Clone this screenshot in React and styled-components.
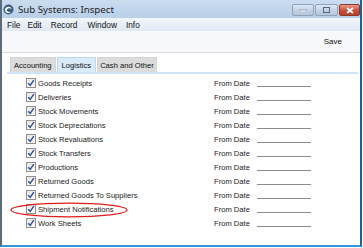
import styled, { createGlobalStyle } from "styled-components";

const GlobalStyle = createGlobalStyle`
  html, body {
    margin: 0;
    padding: 0;
    background: #ffffff;
  }
  body {
    width: 363px;
    height: 248px;
    overflow: hidden;
    font-family: "Liberation Sans", Arial, sans-serif;
  }
`;

const Window = styled.div`
  position: relative;
  box-sizing: border-box;
  width: 362px;
  height: 247px;
  display: flex;
  flex-direction: column;
  background: #ffffff;
  border-left: 2px solid #5b6b7c;
  border-right: 2px solid #245f97;
  border-bottom: 2px solid #3396d8;
`;

const TitleBar = styled.div`
  height: 18px;
  display: flex;
  align-items: center;
  padding-left: 1px;
  background: linear-gradient(#cbdcef, #b9d0e9);
`;

const TitleText = styled.span`
  margin-left: 4px;
  font-family: "Noto Sans", "Open Sans", sans-serif;
  font-size: 9.7px;
  color: #1c1c1c;
  flex: 1;
`;

const WinButtons = styled.div`
  display: flex;
  gap: 1px;
  align-self: flex-start;
  margin-top: 4px;
`;

const WinButton = styled.div`
  box-sizing: border-box;
  width: ${(p) => p.$w}px;
  height: 12px;
  border: 1px solid ${(p) => (p.$close ? "#8d3a2c" : "#8ea2b8")};
  border-radius: 2px;
  background: ${(p) =>
    p.$close
      ? "linear-gradient(#e99a86, #c9503a 55%, #b8402c)"
      : "linear-gradient(#dce7f3, #c3d3e6 55%, #b4c7de)"};
  display: flex;
  align-items: center;
  justify-content: center;
`;

const MenuBar = styled.div`
  height: 13px;
  display: flex;
  align-items: center;
  background: linear-gradient(#f2f6fb, #dfe8f3);
  font-size: 8.3px;
  color: #111;
`;

const MenuItem = styled.span`
  margin-left: ${(p) => p.$ml}px;
`;

const Toolbar = styled.div`
  box-sizing: border-box;
  height: 22px;
  display: flex;
  align-items: center;
  justify-content: flex-end;
  padding-right: 18px;
  background: #f7f8f9;
  border-bottom: 1px solid #dadcdf;
  font-size: 8px;
  color: #111;
`;

const Body = styled.div`
  flex: 1;
  padding: 4px 0 0 5px;
`;

const Tabs = styled.div`
  display: flex;
  height: 15px;
  padding-left: 3px;
`;

const Tab = styled.div`
  box-sizing: border-box;
  display: flex;
  align-items: center;
  padding: 0 ${(p) => p.$pad}px;
  margin-right: 1px;
  font-size: 7.6px;
  color: #111;
  background: ${(p) => (p.$active ? "#d9eaf8" : "#dcdcdc")};
  border: 1px solid ${(p) => (p.$active ? "#bcd8ef" : "#d4d4d4")};
  border-bottom: none;
`;

const Panel = styled.div`
  margin-right: 2px;
  border-top: 2px solid #cfe4f6;
  padding: 2px 0 0 19px;
`;

const Row = styled.div`
  height: 14px;
  display: grid;
  grid-template-columns: 12px 176px 43px 54px;
  align-items: center;
  font-size: 7.6px;
  color: #1a1a1a;
`;

const Check = styled.div`
  box-sizing: border-box;
  width: 10px;
  height: 10px;
  border: 1px solid #8f8f8f;
  background: linear-gradient(#e8e8e8, #fbfbfb);
  display: flex;
  align-items: center;
  justify-content: center;
`;

const DateField = styled.div`
  height: 1px;
  align-self: end;
  margin-bottom: 3px;
  background: #8c8c8c;
`;

const Annotation = styled.svg`
  position: absolute;
  left: 7px;
  top: 202px;
  pointer-events: none;
`;

const rows = [
  "Goods Receipts",
  "Deliveries",
  "Stock Movements",
  "Stock Depreciations",
  "Stock Revaluations",
  "Stock Transfers",
  "Productions",
  "Returned Goods",
  "Returned Goods To Suppliers",
  "Shipment Notifications",
  "Work Sheets",
];

function AppIcon() {
  return (
    <svg width="11" height="11" viewBox="0 0 11 11">
      <circle cx="5.5" cy="5.5" r="5" fill="#3d5f86" />
      <path d="M3 3.5 C5 2 8 2.5 8.5 5 C7 4 5 4 4 5.5 C3 7 5 8.5 8 7.8 C6.5 9.8 3 9.5 2.3 7 C1.8 5.5 2.2 4.3 3 3.5 Z" fill="#ffffff" />
    </svg>
  );
}

export default function App() {
  return (
    <>
      <GlobalStyle />
      <Window>
        <TitleBar>
          <AppIcon />
          <TitleText>Sub Systems: Inspect</TitleText>
          <WinButtons>
            <WinButton $w={22}>
              <svg width="8" height="3"><rect width="8" height="2" y="1" fill="#fff" stroke="#55657a" strokeWidth="0.5" /></svg>
            </WinButton>
            <WinButton $w={23}>
              <svg width="7" height="6"><rect x="0.5" y="0.5" width="6" height="5" fill="none" stroke="#55657a" /></svg>
            </WinButton>
            <WinButton $w={21} $close>
              <svg width="8" height="7">
                <path d="M1 1 L7 6 M7 1 L1 6" stroke="#ffffff" strokeWidth="1.8" />
              </svg>
            </WinButton>
          </WinButtons>
        </TitleBar>
        <MenuBar>
          <MenuItem $ml={5}>File</MenuItem>
          <MenuItem $ml={7}>Edit</MenuItem>
          <MenuItem $ml={9}>Record</MenuItem>
          <MenuItem $ml={10}>Window</MenuItem>
          <MenuItem $ml={9}>Info</MenuItem>
        </MenuBar>
        <Toolbar>Save</Toolbar>
        <Body>
          <Tabs>
            <Tab $pad={3}>Accounting</Tab>
            <Tab $pad={4} $active>Logistics</Tab>
            <Tab $pad={2}>Cash and Other</Tab>
          </Tabs>
          <Panel>
            {rows.map((label) => (
              <Row key={label}>
                <Check>
                  <svg width="8" height="8" viewBox="0 0 8 8">
                    <path d="M1.2 4.2 L3.2 6.3 L6.8 1.2" fill="none" stroke="#2d4f8c" strokeWidth="1.4" />
                  </svg>
                </Check>
                <span>{label}</span>
                <span>From Date</span>
                <DateField />
              </Row>
            ))}
          </Panel>
        </Body>
        <Annotation width="120" height="16" viewBox="0 0 120 16">
          <ellipse cx="60" cy="8" rx="58" ry="6.8" fill="none" stroke="#e01c1c" strokeWidth="1.3" />
        </Annotation>
      </Window>
    </>
  );
}
